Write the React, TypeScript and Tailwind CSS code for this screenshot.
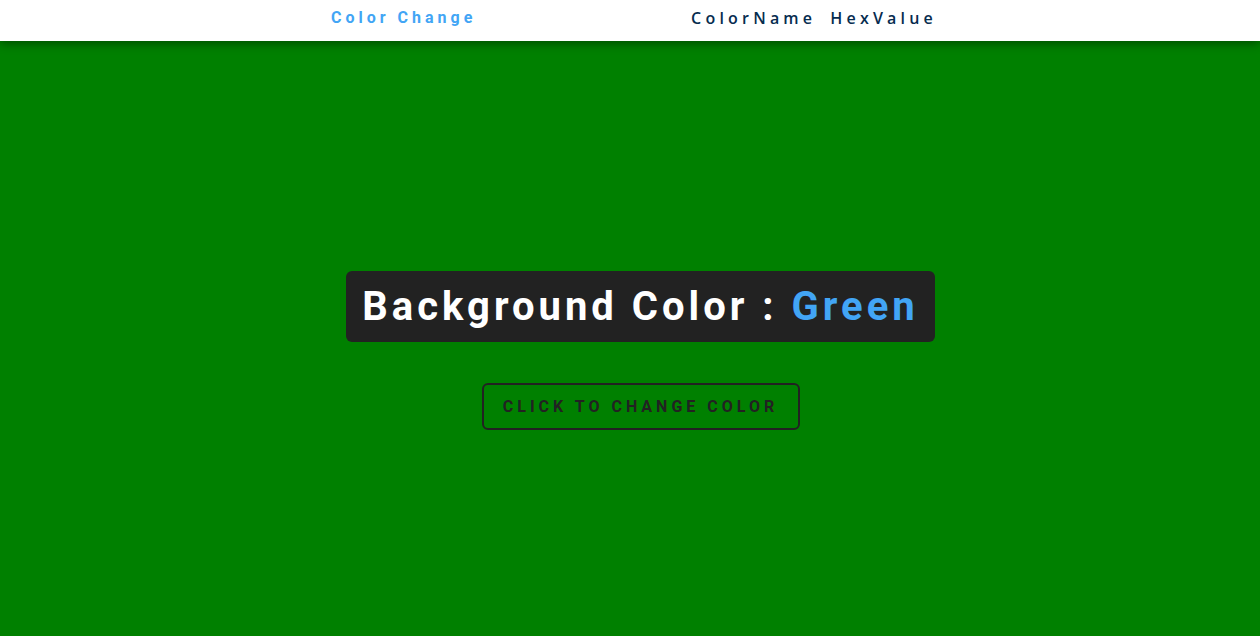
import React, { useState } from 'react';

const colors = [
  { name: 'Green', hex: '#008000' },
  { name: 'Red', hex: '#ff0000' },
  { name: 'Blue', hex: '#0000ff' },
];

const App: React.FC = () => {
  const [index, setIndex] = useState(0);
  const current = colors[index];

  return (
    <div className="min-h-[636px] flex flex-col" style={{ backgroundColor: current.hex }}>
      <nav className="h-[41px] bg-white shadow-[0_2px_10px_rgba(0,0,0,0.45)] flex justify-center pl-[8px] relative z-10">
        <div className="w-[606px] flex items-start justify-between pt-[6px]">
          <a className="font-['Roboto',sans-serif] font-bold text-[16px] tracking-[4px] text-[#42a5f5]">
            Color Change
          </a>
          <ul className="flex gap-[14px] font-['Open_Sans',sans-serif] font-semibold text-[16px] tracking-[4.2px] text-[#062c4f]">
            <li>ColorName</li>
            <li>HexValue</li>
          </ul>
        </div>
      </nav>

      <main className="flex-1 flex flex-col items-center pt-[230px] pl-[21px]">
        <h2 className="bg-[#222] rounded-[6px] px-[16px] h-[71px] flex items-center font-['Roboto',sans-serif] font-bold text-[40px] tracking-[4px] text-white">
          Background Color :&nbsp;<span className="text-[#42a5f5]">{current.name}</span>
        </h2>
        <button
          onClick={() => setIndex((index + 1) % colors.length)}
          className="mt-[41px] w-[318px] h-[47px] border-2 border-[#222] rounded-[6px] font-['Roboto',sans-serif] font-bold text-[16px] tracking-[4px] text-[#222] uppercase"
        >
          Click to change color
        </button>
      </main>
    </div>
  );
};

export default App;
